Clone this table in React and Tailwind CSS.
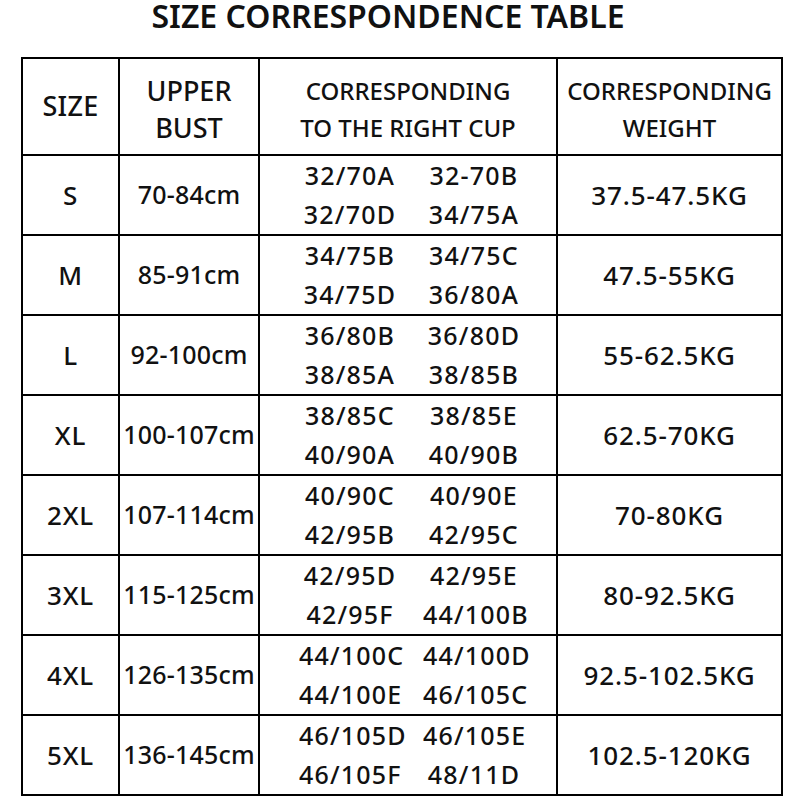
const rows = [
  { size: "S", bust: "70-84cm", cups: [["32/70A", "32-70B"], ["32/70D", "34/75A"]], weight: "37.5-47.5KG" },
  { size: "M", bust: "85-91cm", cups: [["34/75B", "34/75C"], ["34/75D", "36/80A"]], weight: "47.5-55KG" },
  { size: "L", bust: "92-100cm", cups: [["36/80B", "36/80D"], ["38/85A", "38/85B"]], weight: "55-62.5KG" },
  { size: "XL", bust: "100-107cm", cups: [["38/85C", "38/85E"], ["40/90A", "40/90B"]], weight: "62.5-70KG" },
  { size: "2XL", bust: "107-114cm", cups: [["40/90C", "40/90E"], ["42/95B", "42/95C"]], weight: "70-80KG" },
  { size: "3XL", bust: "115-125cm", cups: [["42/95D", "42/95E"], ["42/95F", "44/100B"]], weight: "80-92.5KG" },
  { size: "4XL", bust: "126-135cm", cups: [["44/100C", "44/100D"], ["44/100E", "46/105C"]], weight: "92.5-102.5KG" },
  { size: "5XL", bust: "136-145cm", cups: [["46/105D", "46/105E"], ["46/105F", "48/11D"]], weight: "102.5-120KG" },
];

const App = () => {
  return (
    <div
      className="w-[800px] h-[800px] bg-white text-[#111] overflow-hidden"
      style={{ fontFamily: '"Noto Sans", "Open Sans", sans-serif' }}
    >
      {/* title */}
      <div className="h-[57px] pr-[24px] text-center text-[32px] leading-[31px] font-semibold">
        SIZE CORRESPONDENCE TABLE
      </div>

      <table className="ml-[21px] border-collapse border-2 border-black table-fixed font-medium">
        <colgroup>
          <col className="w-[97px]" />
          <col className="w-[140px]" />
          <col className="w-[298px]" />
          <col className="w-[225px]" />
        </colgroup>

        <thead>
          <tr className="h-[97px]">
            <th className="border-2 border-black text-[27px] font-medium tracking-[0.3px] p-0">SIZE</th>
            <th className="border-2 border-black text-[27px] font-medium leading-[37px] pt-[4px] p-0">
              UPPER
              <br />
              BUST
            </th>
            <th className="border-2 border-black text-[24px] font-medium leading-[37px] pt-[4px] p-0">
              CORRESPONDING
              <br />
              TO THE RIGHT CUP
            </th>
            <th className="border-2 border-black text-[24px] font-medium leading-[37px] pt-[4px] p-0">
              CORRESPONDING
              <br />
              WEIGHT
            </th>
          </tr>
        </thead>

        <tbody>
          {rows.map((row) => (
            <tr key={row.size} className="h-[80px]">
              <td className="border-2 border-black text-center text-[26px] tracking-[0.8px] p-0">
                {row.size}
              </td>
              <td className="border-2 border-black text-center text-[25px] tracking-[0.2px] p-0 whitespace-nowrap">
                {row.bust}
              </td>
              <td className="border-2 border-black p-0">
                <div className="flex flex-col">
                  {row.cups.map((line, i) => (
                    <div key={i} className="flex justify-center gap-[22px] pl-[8px] h-[39px] items-center text-[25px] tracking-[1.2px]">
                      <span className="w-[102px] text-center whitespace-nowrap">{line[0]}</span>
                      <span className="w-[102px] text-center whitespace-nowrap">{line[1]}</span>
                    </div>
                  ))}
                </div>
              </td>
              <td className="border-2 border-black text-center text-[26px] tracking-[0.9px] p-0">
                {row.weight}
              </td>
            </tr>
          ))}
        </tbody>
      </table>
    </div>
  );
};

export default App;
